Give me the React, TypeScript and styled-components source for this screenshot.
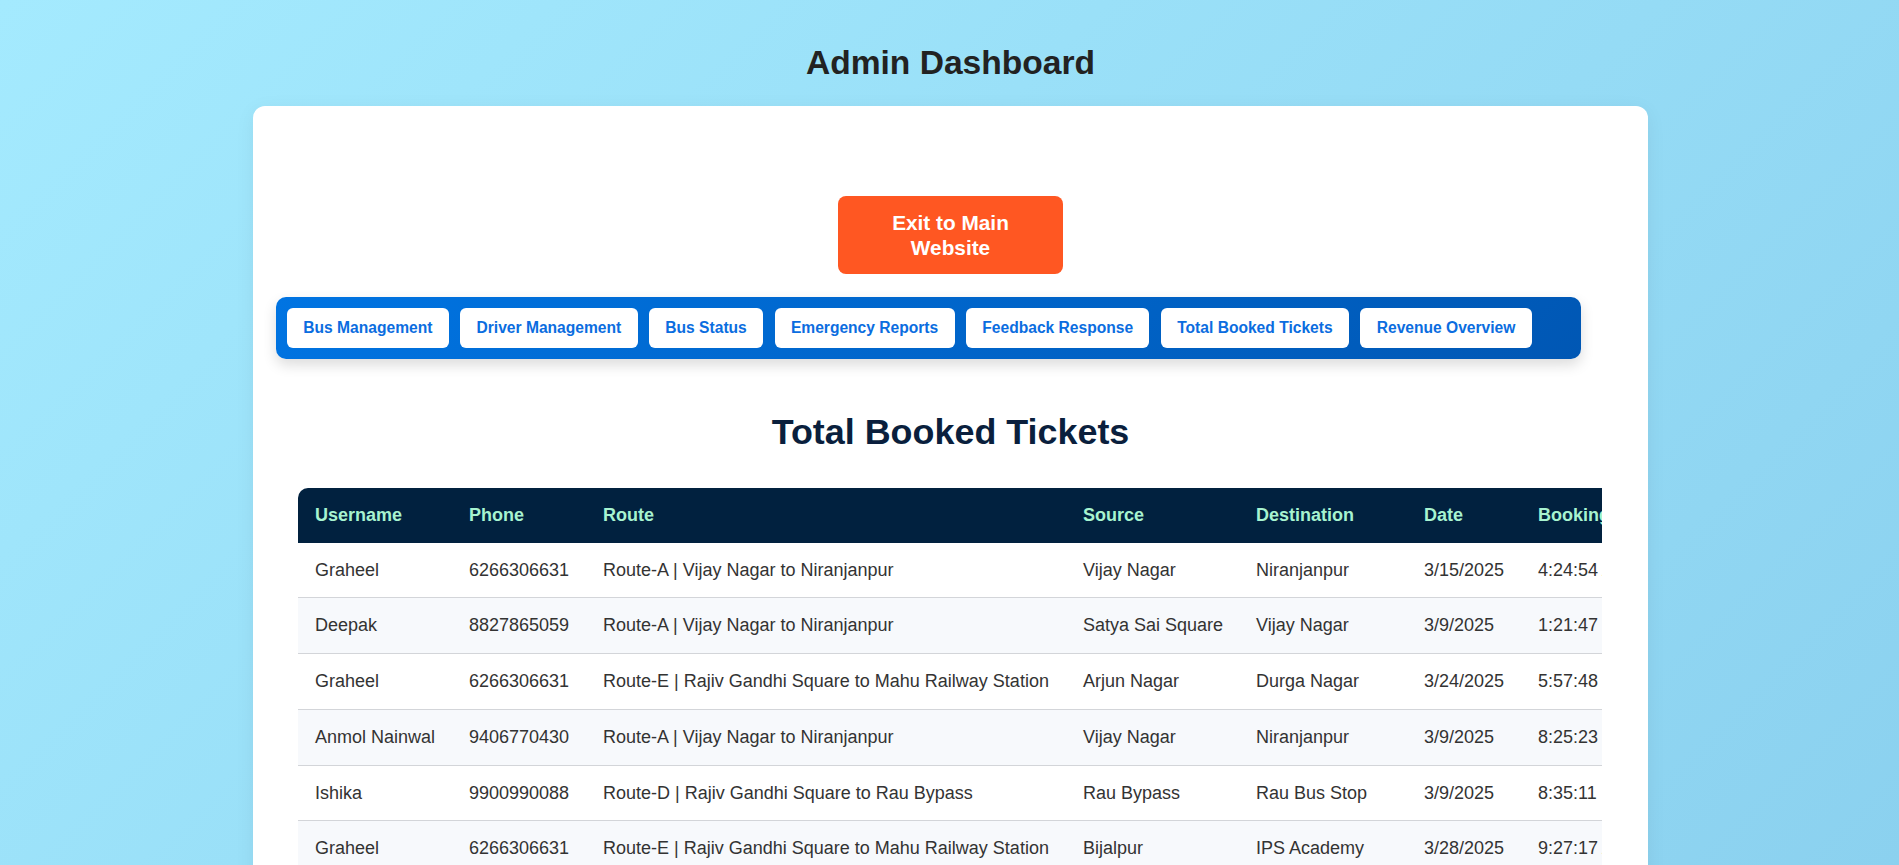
import React from "react";
import styled, { createGlobalStyle } from "styled-components";

const GlobalStyle = createGlobalStyle`
  html, body { margin: 0; padding: 0; }
  * { box-sizing: border-box; }
  body {
    font-family: "Liberation Sans", Arial, Helvetica, sans-serif;
    background: linear-gradient(135deg, #a4eafe 0%, #8bd1ef 100%) fixed;
    min-height: 100vh;
  }
`;

const Page = styled.div`
  display: flex;
  flex-direction: column;
  align-items: center;
  padding: 44px 0 40px 2px;
`;

const Title = styled.h1`
  margin: 0 0 24px;
  font-size: 33.6px;
  line-height: 38px;
  font-weight: 700;
  color: #222222;
`;

const Card = styled.main`
  width: 1395px;
  background: #ffffff;
  border-radius: 12px;
  padding: 90px 0 40px;
  display: flex;
  flex-direction: column;
  align-items: center;
  box-shadow: 0 4px 20px rgba(0, 0, 0, 0.06);
`;

const ExitButton = styled.button`
  width: 225px;
  padding: 14px 20px;
  margin: 0 0 23px;
  border: none;
  border-radius: 8px;
  background: #ff5722;
  color: #ffffff;
  font-family: inherit;
  font-size: 20.8px;
  line-height: 25px;
  font-weight: 700;
  text-align: center;
  cursor: pointer;
`;

const NavBar = styled.nav`
  align-self: flex-start;
  margin-left: 23px;
  width: 1305px;
  padding: 11px;
  display: flex;
  flex-wrap: wrap;
  gap: 11.5px;
  border-radius: 10px;
  background: linear-gradient(135deg, #0074e2 0%, #0057b4 100%);
  box-shadow: 0 6px 14px rgba(0, 0, 0, 0.14);
`;

const NavButton = styled.button`
  height: 40px;
  padding: 0 16.3px;
  border: none;
  border-radius: 6px;
  background: #ffffff;
  color: #0b6de0;
  font-family: inherit;
  font-size: 15.6px;
  font-weight: 700;
  cursor: pointer;
`;

const SectionTitle = styled.h2`
  margin: 53px 0 35px;
  font-size: 35.9px;
  line-height: 41px;
  font-weight: 700;
  color: #0a1f3d;
`;

const TableWrap = styled.div`
  align-self: flex-start;
  margin-left: 45px;
  width: 1304px;
  overflow-x: auto;
`;

const Table = styled.table`
  border-collapse: separate;
  border-spacing: 0;
  table-layout: fixed;
  width: 1693px;
`;

const Col = styled.col<{ $w: number }>`
  width: ${(p) => p.$w}px;
`;

const Th = styled.th`
  background: #01213f;
  color: #a7f3d0;
  font-size: 18px;
  line-height: 20.7px;
  font-weight: 700;
  text-align: left;
  padding: 17px;
  white-space: nowrap;
  &:first-child {
    border-top-left-radius: 10px;
  }
  &:last-child {
    border-top-right-radius: 10px;
  }
`;

const Row = styled.tr`
  &:nth-child(even) td {
    background: #f7f9fc;
  }
`;

const Td = styled.td`
  background: #ffffff;
  color: #333333;
  font-size: 18px;
  line-height: 20.7px;
  padding: 17px;
  white-space: nowrap;
  overflow: hidden;
  border-bottom: 1px solid #d3d5d9;
`;

const columns: { label: string; w: number }[] = [
  { label: "Username", w: 154 },
  { label: "Phone", w: 134 },
  { label: "Route", w: 480 },
  { label: "Source", w: 173 },
  { label: "Destination", w: 168 },
  { label: "Date", w: 114 },
  { label: "Booking Time", w: 160 },
  { label: "Seats", w: 90 },
  { label: "Fare", w: 100 },
  { label: "Status", w: 120 },
];

const rows: string[][] = [
  ["Graheel", "6266306631", "Route-A | Vijay Nagar to Niranjanpur", "Vijay Nagar", "Niranjanpur", "3/15/2025", "4:24:54 AM", "1", "₹25", "Confirmed"],
  ["Deepak", "8827865059", "Route-A | Vijay Nagar to Niranjanpur", "Satya Sai Square", "Vijay Nagar", "3/9/2025", "1:21:47 PM", "1", "₹20", "Confirmed"],
  ["Graheel", "6266306631", "Route-E | Rajiv Gandhi Square to Mahu Railway Station", "Arjun Nagar", "Durga Nagar", "3/24/2025", "5:57:48 PM", "2", "₹40", "Confirmed"],
  ["Anmol Nainwal", "9406770430", "Route-A | Vijay Nagar to Niranjanpur", "Vijay Nagar", "Niranjanpur", "3/9/2025", "8:25:23 PM", "1", "₹25", "Confirmed"],
  ["Ishika", "9900990088", "Route-D | Rajiv Gandhi Square to Rau Bypass", "Rau Bypass", "Rau Bus Stop", "3/9/2025", "8:35:11 PM", "1", "₹15", "Confirmed"],
  ["Graheel", "6266306631", "Route-E | Rajiv Gandhi Square to Mahu Railway Station", "Bijalpur", "IPS Academy", "3/28/2025", "9:27:17 AM", "1", "₹30", "Confirmed"],
  ["Deepak", "8827865059", "Route-B | Palasia to Bhawarkua", "Palasia", "Bhawarkua", "3/30/2025", "10:12:05 AM", "1", "₹20", "Confirmed"],
  ["Ishika", "9900990088", "Route-C | Rajwada to Airport", "Rajwada", "Airport", "4/2/2025", "6:45:30 PM", "2", "₹50", "Confirmed"],
];

const navItems = [
  "Bus Management",
  "Driver Management",
  "Bus Status",
  "Emergency Reports",
  "Feedback Response",
  "Total Booked Tickets",
  "Revenue Overview",
];

export default function App() {
  return (
    <>
      <GlobalStyle />
      <Page>
        <Title>Admin Dashboard</Title>
        <Card>
          <ExitButton>Exit to Main Website</ExitButton>
          <NavBar>
            {navItems.map((n) => (
              <NavButton key={n}>{n}</NavButton>
            ))}
          </NavBar>
          <SectionTitle>Total Booked Tickets</SectionTitle>
          <TableWrap>
            <Table>
              <colgroup>
                {columns.map((c) => (
                  <Col key={c.label} $w={c.w} />
                ))}
              </colgroup>
              <thead>
                <tr>
                  {columns.map((c) => (
                    <Th key={c.label}>{c.label}</Th>
                  ))}
                </tr>
              </thead>
              <tbody>
                {rows.map((r, i) => (
                  <Row key={i}>
                    {r.map((cell, j) => (
                      <Td key={j}>{cell}</Td>
                    ))}
                  </Row>
                ))}
              </tbody>
            </Table>
          </TableWrap>
        </Card>
      </Page>
    </>
  );
}
